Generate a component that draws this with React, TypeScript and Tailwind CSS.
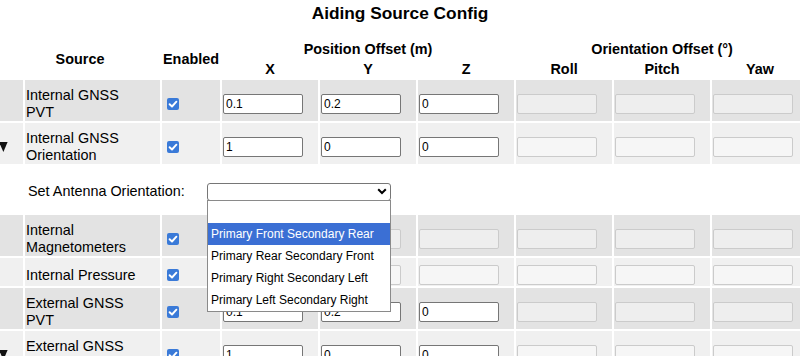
import React from 'react';

type SourceRow = {
    name: string[];
    dark: boolean;
    pos: string[] | null;
    arrow?: boolean;
    antenna?: boolean;
};

const sources: SourceRow[] = [
    { name: ['Internal GNSS', 'PVT'], dark: true, pos: ['0.1', '0.2', '0'] },
    { name: ['Internal GNSS', 'Orientation'], dark: false, pos: ['1', '0', '0'], arrow: true, antenna: true },
    { name: ['Internal', 'Magnetometers'], dark: true, pos: null },
    { name: ['Internal Pressure'], dark: false, pos: null },
    { name: ['External GNSS', 'PVT'], dark: true, pos: ['0.1', '0.2', '0'] },
    { name: ['External GNSS', 'Orientation'], dark: false, pos: ['1', '0', '0'], arrow: true },
];

const antennaOptions = [
    '',
    'Primary Front Secondary Rear',
    'Primary Rear Secondary Front',
    'Primary Right Secondary Left',
    'Primary Left Secondary Right',
];

function Checkbox() {
    return (
        <span className="block ml-[4px] w-[12px] h-[12px] rounded-[2px] bg-[#3a7ad8]">
            <svg width="12" height="12" viewBox="0 0 12 12" className="block">
                <path d="M2.6 6.2 L5 8.5 L9.4 3.7" fill="none" stroke="white" strokeWidth="1.9" strokeLinecap="round" strokeLinejoin="round" />
            </svg>
        </span>
    );
}

function OffsetInput({ value }: { value?: string }) {
    if (value === undefined) {
        return (
            <input
                disabled
                className="block w-[80px] h-[20px] rounded-[2px] border border-[#cbcbcb] bg-white/40 px-[2px] text-[12px]"
            />
        );
    }
    return (
        <input
            defaultValue={value}
            className="block w-[80px] h-[20px] rounded-[2px] border border-[#767676] bg-white px-[2px] text-[12px] text-black outline-none"
        />
    );
}

function AntennaRow() {
    return (
        <tr>
            <td colSpan={9} className="p-0">
                <div className="flex items-center h-[47px] pt-[4px] pl-[28px]">
                    <span className="w-[179px] shrink-0">Set Antenna Orientation:</span>
                    <div className="relative">
                        <div className="flex items-center justify-end w-[184px] h-[18px] rounded-[3px] border border-[#767676] bg-white pr-[3px]">
                            <svg width="10" height="7" viewBox="0 0 10 7">
                                <path d="M1.2 1.2 L5 5 L8.8 1.2" fill="none" stroke="black" strokeWidth="2" />
                            </svg>
                        </div>
                        {/* open option list */}
                        <div className="absolute left-0 top-[17px] z-10 w-[184px] border border-[#8a8a8a] bg-white text-[12px]">
                            {antennaOptions.map((opt, i) => (
                                <div
                                    key={i}
                                    className={
                                        i === 1
                                            ? 'h-[22px] leading-[22px] pl-[3px] bg-[#3b6fd4] text-white'
                                            : 'h-[22px] leading-[22px] pl-[3px] text-black'
                                    }
                                >
                                    {opt}
                                </div>
                            ))}
                        </div>
                    </div>
                </div>
            </td>
        </tr>
    );
}

export default function App() {
    return (
        <div className="w-[800px] h-[356px] overflow-hidden bg-white text-black text-[14.4px] font-['Liberation_Sans',Arial,sans-serif]">
            <h3 className="pt-[3px] text-center text-[17.3px] leading-[20px] font-bold">Aiding Source Config</h3>

            <table className="mt-[15px] ml-[-2px] w-[812px] table-fixed border-separate border-spacing-[2px]">
                <colgroup>
                    <col className="w-[23px]" />
                    <col className="w-[135px]" />
                    <col className="w-[58px]" />
                    <col className="w-[96px]" />
                    <col className="w-[96px]" />
                    <col className="w-[96px]" />
                    <col className="w-[96px]" />
                    <col className="w-[96px]" />
                    <col className="w-[96px]" />
                </colgroup>
                <thead className="font-bold leading-[18px]">
                    <tr>
                        <th colSpan={2} rowSpan={2} className="p-0 text-center">Source</th>
                        <th rowSpan={2} className="p-0 text-center">Enabled</th>
                        <th colSpan={3} className="p-0 text-center">Position Offset (m)</th>
                        <th colSpan={3} className="p-0 text-center">Orientation Offset (°)</th>
                    </tr>
                    <tr>
                        <th className="p-0 text-center">X</th>
                        <th className="p-0 text-center">Y</th>
                        <th className="p-0 text-center">Z</th>
                        <th className="p-0 text-center">Roll</th>
                        <th className="p-0 text-center">Pitch</th>
                        <th className="p-0 text-center">Yaw</th>
                    </tr>
                </thead>
                <tbody className="leading-[16.5px]">
                    {sources.map((row) => {
                        const bg = row.dark ? 'bg-[#e3e3e3]' : 'bg-[#f0f0f0]';
                        const cell = `${bg} pt-[7px] pb-[1px] px-[1px]`;
                        return (
                            <React.Fragment key={row.name.join(' ')}>
                                <tr>
                                    <td className={`${bg} pt-[7px] pb-[1px] px-0`}>
                                        {row.arrow && (
                                            <svg width="8" height="10" viewBox="0 0 8 10" className="block overflow-visible">
                                                <polygon points="-1,0 7.6,0 3.4,10" fill="#111" />
                                            </svg>
                                        )}
                                    </td>
                                    <td className={cell}>
                                        {row.name.map((line) => (
                                            <span key={line} className="block">{line}</span>
                                        ))}
                                    </td>
                                    <td className={cell}>
                                        <Checkbox />
                                    </td>
                                    {[0, 1, 2].map((i) => (
                                        <td key={i} className={cell}>
                                            <OffsetInput value={row.pos ? row.pos[i] : undefined} />
                                        </td>
                                    ))}
                                    {[0, 1, 2].map((i) => (
                                        <td key={'o' + i} className={cell}>
                                            <OffsetInput />
                                        </td>
                                    ))}
                                </tr>
                                {row.antenna && <AntennaRow />}
                            </React.Fragment>
                        );
                    })}
                </tbody>
            </table>
        </div>
    );
}
